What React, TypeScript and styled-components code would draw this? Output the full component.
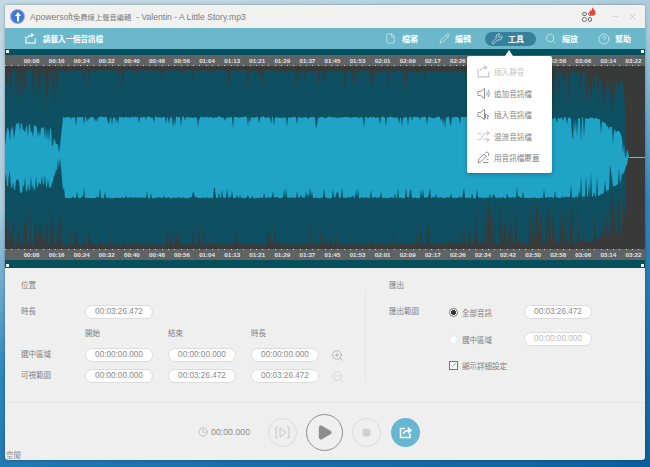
import React from 'react';
import styled, { createGlobalStyle } from 'styled-components';
import {
  File, Pencil, Wrench, Search, CircleHelp, Shuffle, ZoomIn, ZoomOut,
  Clock, Play, Square, X, Minus, Check,
} from 'lucide-react';

const GlobalStyle = createGlobalStyle`
  html, body { margin: 0; padding: 0; }
  body {
    width: 650px;
    height: 467px;
    overflow: hidden;
    font-family: "Liberation Sans", "Noto Sans CJK TC", sans-serif;
  }
`;

const Desktop = styled.div`
  width: 650px;
  height: 467px;
  padding: 5px;
  box-sizing: border-box;
  background: linear-gradient(165deg, #c4d9e4 0%, #a9cbdc 32%, #2f86bd 58%, #0b5f9c 100%);
`;

const Window = styled.div`
  width: 640px;
  height: 455px;
  display: flex;
  flex-direction: column;
  background: #efefef;
  border-radius: 3px;
  box-shadow: 0 0 3px rgba(0, 0, 0, 0.35);
`;

const TitleBar = styled.div`
  height: 23px;
  display: flex;
  align-items: center;
  padding: 0 7px 0 5px;
  background: #f1f1ef;
  border-radius: 3px 3px 0 0;
`;

const Logo = styled.div`
  width: 15px;
  height: 15px;
  box-sizing: border-box;
  border-radius: 50%;
  background: #3f78dd;
  border: 1px solid #a9a8ea;
  display: flex;
  align-items: center;
  justify-content: center;
  margin-right: 5px;
`;

const TitleText = styled.div`
  flex: 1;
  font-size: 8.6px;
  color: #7d7d7d;
  white-space: nowrap;
`;

const TitleCjk = styled.span`
  font-size: 7.3px;
`;

const WinButtons = styled.div`
  display: flex;
  align-items: center;
  gap: 7px;
  color: #b5b5b5;
`;

const AppsIcon = styled.div`
  position: relative;
  width: 10px;
  height: 10px;
  margin-right: 12px;
  display: grid;
  grid-template-columns: 1fr 1fr;
  gap: 1px;
`;

const AppsCell = styled.span`
  border: 1px solid #707070;
  border-radius: 50%;
`;

const Flame = styled.svg`
  position: absolute;
  top: -5px;
  right: -4px;
`;

const Toolbar = styled.div`
  height: 21px;
  display: flex;
  align-items: center;
  padding: 0 14px 0 20px;
  background: #6bb8cb;
  color: #fff;
`;

const LoadButton = styled.div`
  flex: 1;
  display: flex;
  align-items: center;
  gap: 7px;
  font-size: 7.5px;
  font-weight: 700;
`;

const ToolItem = styled.div<{ $gap: number }>`
  display: flex;
  align-items: center;
  gap: ${p => p.$gap}px;
  font-size: 8px;
  font-weight: 700;
`;

const ActiveTool = styled(ToolItem)`
  width: 51px;
  height: 14px;
  box-sizing: border-box;
  margin-left: 14px;
  padding-left: 6px;
  border-radius: 8px;
  background: #37809b;
`;

const ToolGroup = styled.div<{ $gap: number; $left?: number }>`
  display: flex;
  align-items: center;
  gap: ${p => p.$gap}px;
  margin-left: ${p => p.$left || 0}px;
`;

const WaveArea = styled.div`
  position: relative;
  background: #04505e;
  padding: 6px 0 8px;
`;

const Handle = styled.span<{ $pos: string }>`
  position: absolute;
  width: 3px;
  height: 3px;
  background: #fff;
  ${p => p.$pos}
`;

const Ruler = styled.div<{ $ticks: 'top' | 'bottom' }>`
  height: 11px;
  display: flex;
  padding-left: 14px;
  background-color: #5f6363;
  background-image: repeating-linear-gradient(90deg, #d5d5d5 0 1px, transparent 1px 6.27px);
  background-size: 100% 1px;
  background-repeat: no-repeat;
  background-position: ${p => (p.$ticks === 'top' ? 'top' : 'bottom')};
`;

const RulerLabel = styled.span`
  width: 25.08px;
  flex: none;
  text-align: center;
  font-size: 6.2px;
  font-weight: 700;
  line-height: 11px;
  color: #e4e4e4;
`;

const WaveSvg = styled.svg`
  display: block;
  width: 640px;
  height: 183px;
`;

const Menu = styled.div`
  position: absolute;
  left: 462px;
  top: 7px;
  width: 85px;
  height: 117px;
  box-sizing: border-box;
  padding-top: 5px;
  background: #fff;
  border-radius: 2px;
  box-shadow: 0 1px 4px rgba(0, 0, 0, 0.3);
  &::before {
    content: '';
    position: absolute;
    left: 38px;
    top: -6px;
    border-left: 4px solid transparent;
    border-right: 4px solid transparent;
    border-bottom: 6px solid #fff;
  }
`;

const MenuItem = styled.div<{ $disabled?: boolean }>`
  height: 21.5px;
  display: flex;
  align-items: center;
  gap: 4px;
  padding-left: 10px;
  font-size: 7.6px;
  color: ${p => (p.$disabled ? '#c4c4c4' : '#858585')};
`;

const Panel = styled.div`
  flex: 1;
  display: flex;
  flex-direction: column;
  min-height: 0;
`;

const Forms = styled.div`
  height: 135px;
  flex: none;
  display: flex;
  border-bottom: 1px solid #e6e6e6;
  box-sizing: border-box;
`;

const PositionForm = styled.div`
  width: 360px;
  box-sizing: border-box;
  padding: 11px 0 0 16px;
  display: grid;
  grid-template-columns: 49px 68px 68px 68px 20px;
  column-gap: 15px;
  grid-template-rows: 26px 22px 21px 21px 14px;
  align-items: start;
  align-content: start;
`;

const Divider = styled.div`
  width: 1px;
  height: 92px;
  margin-top: 22px;
  background: #e6e6e6;
`;

const ExportForm = styled.div`
  flex: 1;
  padding: 11px 0 0 23px;
  display: grid;
  grid-template-columns: 60px 75px 68px;
  grid-template-rows: 26px 27px 26px 14px;
  align-items: start;
  align-content: start;
`;

const Label = styled.span`
  display: block;
  font-size: 7.5px;
  line-height: 14px;
  color: #808080;
  white-space: nowrap;
`;

const Heading = styled(Label)`
  grid-column: 1 / -1;
`;

const Wide = styled.div`
  grid-column: 2 / -1;
`;

const Field = styled.div<{ $faint?: boolean }>`
  width: 68px;
  height: 14px;
  box-sizing: border-box;
  border: 1px solid #dcdcdc;
  border-radius: 7px;
  background: #fff;
  text-align: center;
  font-size: 8.2px;
  line-height: 12px;
  color: ${p => (p.$faint ? '#bbb' : '#8a8a8a')};
`;

const ZoomSlot = styled.div`
  margin-left: -3px;
  height: 14px;
`;

const Blank = styled.span``;

const OptionCell = styled.div`
  height: 14px;
  display: flex;
  align-items: center;
  gap: 4px;
  font-size: 7.5px;
  color: #808080;
  white-space: nowrap;
`;

const Radio = styled.span<{ $on?: boolean }>`
  width: 9px;
  height: 9px;
  box-sizing: border-box;
  border-radius: 50%;
  background: ${p => (p.$on ? 'radial-gradient(circle, #333 0 2.2px, #fff 2.8px)' : '#fff')};
  border: 1px solid ${p => (p.$on ? '#777' : '#e4e4e4')};
`;

const CheckBox = styled.span`
  width: 9px;
  height: 9px;
  box-sizing: border-box;
  border: 1px solid #777;
  background: #fff;
  display: flex;
  align-items: center;
  justify-content: center;
  color: #444;
`;

const Transport = styled.div`
  height: 30px;
  flex: none;
  margin-top: 14px;
  display: flex;
  align-items: center;
  padding-left: 193px;
`;

const Time = styled.div`
  display: flex;
  align-items: center;
  gap: 3px;
  width: 70px;
  color: #8c8c8c;
  font-size: 8.8px;
`;

const RoundButton = styled.div<{ $size: number; $color: string; $bg?: string; $gap: number }>`
  width: ${p => p.$size}px;
  height: ${p => p.$size}px;
  margin-right: ${p => p.$gap}px;
  box-sizing: border-box;
  flex: none;
  border-radius: 50%;
  border: ${p => (p.$bg ? 'none' : `1px solid ${p.$color}`)};
  background: ${p => p.$bg || 'transparent'};
  display: flex;
  align-items: center;
  justify-content: center;
`;

const Status = styled.div`
  height: 10px;
  margin-top: 4px;
  padding-left: 1px;
  font-size: 7.5px;
  line-height: 10px;
  color: #8a8a8a;
`;

const labels = [
  '00:08', '00:16', '00:24', '00:32', '00:40', '00:48', '00:56', '01:04', '01:13', '01:21', '01:29', '01:37', '01:45',
  '01:53', '02:01', '02:09', '02:17', '02:26', '02:34', '02:42', '02:50', '02:58', '03:06', '03:14', '03:22',
];

// small seeded generator so the wave looks the same on every load
const rng = (seed: number) => () => {
  seed = (seed * 16807) % 2147483647;
  return seed / 2147483647;
};

const lerp = (pts: number[][], x: number) => {
  for (let i = 1; i < pts.length; i++) {
    if (x <= pts[i][0]) {
      const [x0, y0] = pts[i - 1];
      const [x1, y1] = pts[i];
      return y0 + ((y1 - y0) * (x - x0)) / (x1 - x0);
    }
  }
  return pts[pts.length - 1][1];
};

// half heights of the waveform around the centre line, by x
const outerEnv = [[0, 60], [2, 88], [560, 87], [590, 84], [600, 78], [618, 76], [620, 50], [622, 6], [625, 0.5], [640, 0.5]];
const innerEnv = [[0, 24], [2, 29], [14, 36], [46, 30], [51, 14], [55, 12], [58, 41], [540, 41], [592, 40], [600, 35], [615, 26], [625, 0.5], [640, 0.5]];

const buildWave = (env: number[][], seed: number, spike: (x: number) => number, chance: (x: number) => number) => {
  const r = rng(seed);
  const top: string[] = [];
  const bottom: string[] = [];
  for (let x = 0; x <= 640; x += 1) {
    const base = lerp(env, x);
    const dip = () => (r() < chance(x) ? r() * spike(x) : r() * 1.5);
    top.push(`${x},${(91.5 - Math.max(0.5, base - dip())).toFixed(1)}`);
    bottom.unshift(`${x},${(91.5 + Math.max(0.5, base - dip())).toFixed(1)}`);
  }
  return `M${top.join(' L')} L${bottom.join(' L')} Z`;
};

const isLeft = (x: number) => x < 57;
const isTail = (x: number) => x > 470 && x < 625;

const outerWave = buildWave(
  outerEnv, 11,
  x => (isLeft(x) ? 42 : isTail(x) ? 48 : 24),
  x => (isLeft(x) ? 0.5 : isTail(x) ? 0.4 : 0.14),
);
const innerWave = buildWave(
  innerEnv, 29,
  x => (isLeft(x) ? 16 : x > 565 ? 26 : 12),
  x => (isLeft(x) ? 0.5 : x > 565 ? 0.32 : 0.18),
);

const Waveform = () => (
  <WaveSvg viewBox="0 0 640 183" preserveAspectRatio="none">
    <rect width="640" height="183" fill="#383a3a" />
    <path d={outerWave} fill="#0e5062" />
    <path d={innerWave} fill="#1fa3c7" />
    <rect x="625" y="91" width="15" height="1" fill="#63c4b8" />
  </WaveSvg>
);

const times = labels.map(t => <RulerLabel key={t}>{t}</RulerLabel>);

const UploadIcon = ({ color, size }: { color: string; size: number }) => (
  <svg width={size} height={size} viewBox="0 0 12 12" fill="none" stroke={color} strokeWidth="1.1">
    <path d="M1 3.5 V11 H11 V6" />
    <path d="M3 5.5 C3.5 3 5.5 2.3 8.5 2.3 M6.5 .5 L9 2.3 L6.5 4.2" />
  </svg>
);

const SpeakerIcon = ({ cursor }: { cursor?: boolean }) => (
  <svg width="13" height="13" viewBox="0 0 13 13" fill="none" stroke="#858585" strokeWidth=".9">
    <path d="M1 4.5 H3.5 L7.5 1.5 V11.5 L3.5 8.5 H1 Z" />
    {cursor ? (
      <path d="M8.5 6 L12 8.5 L10.2 9 L11 11.5 M8.5 6 V10.5" />
    ) : (
      <path d="M9.5 4.5 C10.5 5.5 10.5 7.5 9.5 8.5 M11 3 C12.6 5 12.6 8 11 10" />
    )}
  </svg>
);

const OverwriteIcon = () => (
  <svg width="13" height="13" viewBox="0 0 13 13" fill="none" stroke="#858585" strokeWidth=".9">
    <path d="M1 11.5 L1.6 8.6 L7 3 L9.3 5.2 L3.8 10.8 Z" />
    <path d="M8.4 1.6 L10.5 1 L12 2.8 L11.2 5 M6 11.5 H11.5 M9.6 8 L11.5 8.8" />
  </svg>
);

const ExportIcon = () => (
  <svg width="14" height="13" viewBox="0 0 14 13" fill="none" stroke="#fff" strokeWidth="1.5">
    <path d="M6 2.5 H1.5 V11.5 H11 V7.5" />
    <path d="M4.5 8 C5 5.5 6.8 4.5 10 4.5" />
    <path d="M9 1 L13 4.5 L9 7.5 Z" fill="#fff" strokeWidth=".5" />
  </svg>
);

const menuIcon = { size: 13, strokeWidth: 0.9, color: '#858585' };

export default function App() {
  return (
    <Desktop>
      <GlobalStyle />
      <Window>
        <TitleBar>
          <Logo>
            <svg width="8" height="10" viewBox="0 0 9 11">
              <path d="M4.5 0 L8 4.5 H5.7 V10.5 H3.3 V4.5 H1 Z" fill="#fff" />
            </svg>
          </Logo>
          <TitleText>Apowersoft<TitleCjk>免費線上聲音編輯</TitleCjk>&nbsp; - Valentin - A Little Story.mp3</TitleText>
          <WinButtons>
            <AppsIcon>
              <AppsCell /><AppsCell /><AppsCell /><AppsCell />
              <Flame width="7" height="9" viewBox="0 0 8 10">
                <path d="M4 0 C4.5 2 7.5 3.5 7.5 6.3 A3.5 3.5 0 0 1 .5 6.3 C.5 4.8 1.4 4 2 3.2 C2.4 4 2.8 4.2 3.1 4.2 C3.4 3 3.2 1.4 4 0 Z" fill="#e2483d" />
              </Flame>
            </AppsIcon>
            <Minus size={9} strokeWidth={1.2} />
            <X size={11} strokeWidth={1.2} />
          </WinButtons>
        </TitleBar>

        <Toolbar>
          <LoadButton>
            <UploadIcon color="#fff" size={11} />
            請載入一個音訊檔
          </LoadButton>
          <ToolGroup $gap={21}>
            <ToolItem $gap={6}><File size={11} strokeWidth={1.1} />檔案</ToolItem>
            <ToolItem $gap={5}><Pencil size={11} strokeWidth={1.1} />編輯</ToolItem>
          </ToolGroup>
          <ActiveTool $gap={5}><Wrench size={12} strokeWidth={1.2} />工具</ActiveTool>
          <ToolGroup $gap={20} $left={9}>
            <ToolItem $gap={6}><Search size={11} strokeWidth={1.1} />縮放</ToolItem>
            <ToolItem $gap={5}><CircleHelp size={12} strokeWidth={1.1} />幫助</ToolItem>
          </ToolGroup>
        </Toolbar>

        <WaveArea>
          <Handle $pos="left: 1px; top: 1px;" />
          <Handle $pos="right: 1px; top: 1px;" />
          <Ruler $ticks="bottom">{times}</Ruler>
          <Waveform />
          <Ruler $ticks="top">{times}</Ruler>
          <Handle $pos="left: 1px; bottom: 1px;" />
          <Handle $pos="right: 1px; bottom: 1px;" />
          <Menu>
            <MenuItem $disabled><UploadIcon color="#c8c8c8" size={13} />插入靜音</MenuItem>
            <MenuItem><SpeakerIcon />追加音訊檔</MenuItem>
            <MenuItem><SpeakerIcon cursor />插入音訊檔</MenuItem>
            <MenuItem><Shuffle {...menuIcon} />混流音訊檔</MenuItem>
            <MenuItem><OverwriteIcon />用音訊檔覆蓋</MenuItem>
          </Menu>
        </WaveArea>

        <Panel>
          <Forms>
            <PositionForm>
              <Heading>位置</Heading>
              <Label>時長</Label>
              <Wide><Field>00:03:26.472</Field></Wide>
              <Blank />
              <Label>開始</Label>
              <Label>結束</Label>
              <Label>時長</Label>
              <Blank />
              <Label>選中區域</Label>
              <Field>00:00:00.000</Field>
              <Field>00:00:00.000</Field>
              <Field>00:00:00.000</Field>
              <ZoomSlot><ZoomIn size={13} strokeWidth={1} color="#8a8a8a" /></ZoomSlot>
              <Label>可視範圍</Label>
              <Field>00:00:00.000</Field>
              <Field>00:03:26.472</Field>
              <Field>00:03:26.472</Field>
              <ZoomSlot><ZoomOut size={13} strokeWidth={1} color="#c4c4c4" /></ZoomSlot>
            </PositionForm>
            <Divider />
            <ExportForm>
              <Heading>匯出</Heading>
              <Label>匯出範圍</Label>
              <OptionCell><Radio $on />全部音訊</OptionCell>
              <Field>00:03:26.472</Field>
              <Blank />
              <OptionCell><Radio />選中區域</OptionCell>
              <Field $faint>00:00:00.000</Field>
              <Blank />
              <OptionCell><CheckBox><Check size={8} strokeWidth={1.6} /></CheckBox>顯示詳細設定</OptionCell>
            </ExportForm>
          </Forms>

          <Transport>
            <Time><Clock size={10} strokeWidth={1.1} />00:00.000</Time>
            <RoundButton $size={29} $color="#dcdcdc" $gap={9}>
              <svg width="15" height="13" viewBox="0 0 15 13" fill="none" stroke="#c6c6c6" strokeWidth="1">
                <path d="M3 1 H1 V12 H3 M12 1 H14 V12 H12 M5 2 L11 6.5 L5 11 Z" />
              </svg>
            </RoundButton>
            <RoundButton $size={37} $color="#8e8e8e" $gap={9}>
              <Play size={17} fill="#8e8e8e" color="#8e8e8e" />
            </RoundButton>
            <RoundButton $size={29} $color="#dcdcdc" $gap={10}>
              <Square size={9} fill="#cfcfcf" color="#cfcfcf" />
            </RoundButton>
            <RoundButton $size={29} $color="#68b7d2" $bg="#68b7d2" $gap={0}>
              <ExportIcon />
            </RoundButton>
          </Transport>
          <Status>空閒</Status>
        </Panel>
      </Window>
    </Desktop>
  );
}
